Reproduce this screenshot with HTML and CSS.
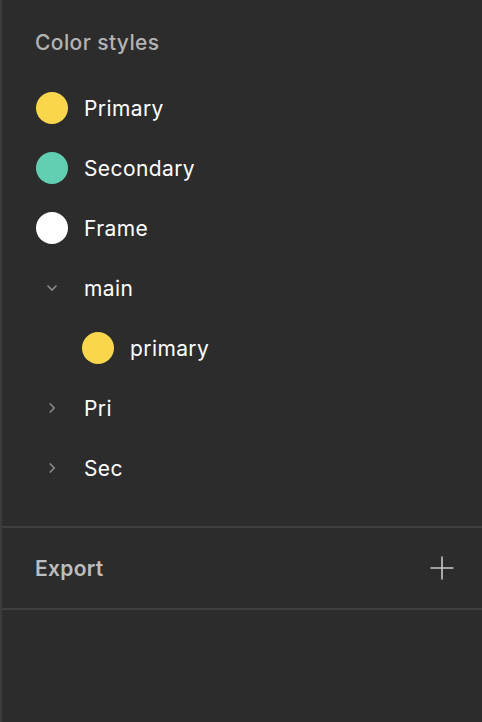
FILE: index.html
```html
<!DOCTYPE html>
<html>
<head>
<meta charset="utf-8">
<link rel="stylesheet" href="styles.css">
</head>
<body>
<div class="panel">
  <section class="styles">
    <h2 class="title">Color styles</h2>
    <ul class="list">
      <li class="row"><span class="swatch yellow"></span><span class="label">Primary</span></li>
      <li class="row"><span class="swatch teal"></span><span class="label">Secondary</span></li>
      <li class="row"><span class="swatch white"></span><span class="label">Frame</span></li>
      <li class="row"><span class="icon"><svg width="12" height="8" viewBox="0 0 12 8"><path d="M1.5 1.5 L6 6 L10.5 1.5" fill="none" stroke="#8a8a8a" stroke-width="1.6"/></svg></span><span class="label">main</span></li>
      <li class="row nested"><span class="swatch yellow"></span><span class="label">primary</span></li>
      <li class="row"><span class="icon"><svg width="8" height="12" viewBox="0 0 8 12"><path d="M1.8 1.5 L6.2 6 L1.8 10.5" fill="none" stroke="#8a8a8a" stroke-width="1.6"/></svg></span><span class="label">Pri</span></li>
      <li class="row"><span class="icon"><svg width="8" height="12" viewBox="0 0 8 12"><path d="M1.8 1.5 L6.2 6 L1.8 10.5" fill="none" stroke="#8a8a8a" stroke-width="1.6"/></svg></span><span class="label">Sec</span></li>
    </ul>
  </section>
  <section class="export">
    <h2 class="export-title">Export</h2>
    <svg class="plus" width="24" height="24" viewBox="0 0 24 24"><path d="M12 0.5 V23.5 M0.5 12 H23.5" stroke="#c8c8c8" stroke-width="1.6" fill="none"/></svg>
  </section>
</div>
</body>
</html>
```

FILE: styles.css
```css
html, body {
  margin: 0;
  padding: 0;
  height: 100%;
}
body {
  background: #2c2c2c;
  font-family: Inter, "Liberation Sans", sans-serif;
}
.panel {
  min-height: 100%;
  border-left: 2px solid #3b3b3b;
  box-sizing: border-box;
}
.styles {
  padding: 31px 0 28px 34px;
  border-bottom: 2px solid #3f3f3f;
}
.title {
  margin: 0 0 23px -1px;
  font-size: 21px;
  letter-spacing: 0.4px;
  line-height: 24px;
  font-weight: 500;
  color: #b3b3b3;
}
.list {
  list-style: none;
  margin: 0;
  padding: 0;
}
.row {
  height: 60px;
  display: flex;
  align-items: center;
  gap: 16px;
}
.row.nested {
  padding-left: 46px;
}
.swatch {
  width: 32px;
  height: 32px;
  border-radius: 50%;
  flex: none;
}
.yellow { background: #f9d64b; }
.teal { background: #62cfb3; }
.white { background: #ffffff; }
.icon {
  width: 32px;
  height: 32px;
  flex: none;
  display: flex;
  align-items: center;
  justify-content: center;
}
.label {
  font-size: 21px;
  letter-spacing: 0.4px;
  color: #ffffff;
  line-height: 24px;
  padding-top: 2px;
}
.export {
  height: 80px;
  display: flex;
  align-items: center;
  justify-content: space-between;
  padding: 0 28px 0 33px;
  border-bottom: 2px solid #3f3f3f;
}
.export-title {
  margin: 0;
  font-size: 21px;
  letter-spacing: 0.3px;
  font-weight: 600;
  color: #bdbdbd;
}
.plus {
  display: block;
}
```
